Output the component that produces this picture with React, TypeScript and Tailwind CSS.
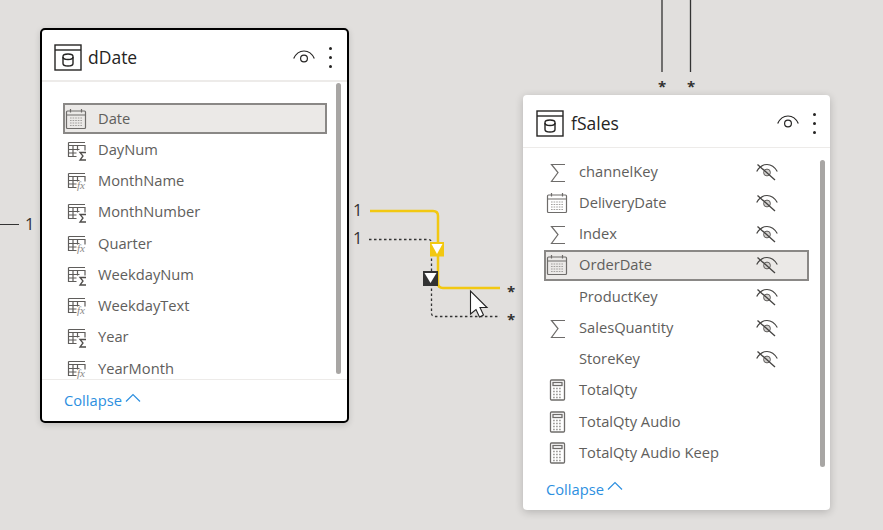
type FieldKind = 'date' | 'sum' | 'fx' | 'sigma' | 'calc' | 'none';

interface Field {
  name: string;
  kind: FieldKind;
  selected?: boolean;
  hidden?: boolean;
}

const dateFields: Field[] = [
  { name: 'Date', kind: 'date', selected: true },
  { name: 'DayNum', kind: 'sum' },
  { name: 'MonthName', kind: 'fx' },
  { name: 'MonthNumber', kind: 'sum' },
  { name: 'Quarter', kind: 'fx' },
  { name: 'WeekdayNum', kind: 'sum' },
  { name: 'WeekdayText', kind: 'fx' },
  { name: 'Year', kind: 'sum' },
  { name: 'YearMonth', kind: 'fx' },
];

const salesFields: Field[] = [
  { name: 'channelKey', kind: 'sigma', hidden: true },
  { name: 'DeliveryDate', kind: 'date', hidden: true },
  { name: 'Index', kind: 'sigma', hidden: true },
  { name: 'OrderDate', kind: 'date', selected: true, hidden: true },
  { name: 'ProductKey', kind: 'none', hidden: true },
  { name: 'SalesQuantity', kind: 'sigma', hidden: true },
  { name: 'StoreKey', kind: 'none', hidden: true },
  { name: 'TotalQty', kind: 'calc' },
  { name: 'TotalQty Audio', kind: 'calc' },
  { name: 'TotalQty Audio Keep', kind: 'calc' },
];

function TableIcon() {
  return (
    <svg width="28" height="27" viewBox="0 0 28 27" fill="none" stroke="#252423" strokeWidth="1.4">
      <rect x="1" y="1" width="26" height="25" />
      <path d="M1 6h26" />
      <path d="M9 12.500c0-1.600 2.200-2.500 5-2.500s5 .9 5 2.500v7c0 1.600-2.200 2.500-5 2.500s-5-.9-5-2.500z" />
      <path d="M9 13c0 1.600 2.200 2.500 5 2.500s5-.9 5-2.500" />
    </svg>
  );
}

function FieldIcon({ kind }: { kind: FieldKind }) {
  if (kind === 'none') return <span className="w-[22px] h-[22px]" />;
  if (kind === 'date') {
    return (
      <svg width="22" height="22" viewBox="0 0 22 22" fill="none" stroke="#6e6c6a" strokeWidth="1.200">
        <rect x="1.500" y="3" width="19" height="17.500" rx="1" />
        <path d="M1.500 7h19M5.500 1v3.500M16.500 1v3.500" />
        <path d="M5 10h12M5 12.500h12M5 15h12M5 17.500h12" stroke="#a19f9d" strokeWidth="1.200" strokeDasharray="1.600 1" />
      </svg>
    );
  }
  if (kind === 'sigma') {
    return (
      <svg width="22" height="22" viewBox="0 0 22 22" fill="none" stroke="#6e6c6a" strokeWidth="1.200">
        <path d="M19 3.500H5.500l6.500 8-6.500 9H19" />
      </svg>
    );
  }
  if (kind === 'calc') {
    return (
      <svg width="22" height="22" viewBox="0 0 22 22" fill="none" stroke="#6e6c6a" strokeWidth="1.300">
        <rect x="4.500" y="1" width="14" height="20" rx="1" />
        <rect x="7" y="3.500" width="9" height="3" />
        <path d="M7 9.500h9M7 12.500h9M7 15.500h9M7 18.500h9" stroke="#a19f9d" strokeWidth="1.400" strokeDasharray="1.800 1.200" />
      </svg>
    );
  }
  return (
    <svg width="22" height="22" viewBox="0 0 22 22" fill="none" stroke="#5f5d5b" strokeWidth="1.200">
      <path d="M3.500 3.500h16.500M3.500 3.500v14h8M3.500 6.500h16.500v5" />
      <path d="M8 6.500v11M3.500 10.500h11M3.500 14h8M12.500 6.500v5" />
      {kind === 'sum' ? (
        <path d="M21 13.500h-6l3 3.500-3 4h6" strokeWidth="1.300" stroke="#4f4d4b" />
      ) : (
        <text x="12" y="18.500" fontSize="11" fontStyle="italic" fontFamily="'Liberation Serif', serif" fill="#8a8886" stroke="none">
          fx
        </text>
      )}
    </svg>
  );
}

function EyeIcon() {
  return (
    <svg width="22" height="16" viewBox="0 0 22 16" fill="none" stroke="#252423" strokeWidth="1.200">
      <path d="M.7 8.500C3 3.500 7 1 11 1s8 2.500 10.300 7.500" />
      <circle cx="11" cy="8.500" r="3.400" />
    </svg>
  );
}

function EyeOffIcon() {
  return (
    <svg width="22" height="18" viewBox="0 0 22 18" fill="none" stroke="#444341" strokeWidth="1.200">
      <path d="M.7 8.500C3 4.500 7 1.500 11 1.500s8 3 10.300 7" />
      <circle cx="11" cy="9.500" r="3.400" fill="#d2d0ce" stroke="#605e5c" strokeWidth="1" />
      <path d="M1.500 1.500l17.500 15.500" strokeWidth="1.300" />
    </svg>
  );
}

function MoreDots() {
  return (
    <div className="flex flex-col gap-[6px]">
      <span className="w-[3px] h-[3px] rounded-full bg-[#252423]" />
      <span className="w-[3px] h-[3px] rounded-full bg-[#252423]" />
      <span className="w-[3px] h-[3px] rounded-full bg-[#252423]" />
    </div>
  );
}

function FieldRow({ field }: { field: Field }) {
  return (
    <div
      className={`h-[31.25px] shrink-0 flex items-center pl-[2px] pr-[31px] text-[#605e5c] text-[14.7px] ${
        field.selected ? 'bg-[#ebe9e7] outline-2 -outline-offset-2 outline-[#8a8886]' : ''
      }`}
    >
      <span className="w-[33px] shrink-0 flex items-center">
        <FieldIcon kind={field.kind} />
      </span>
      <span className="flex-1 whitespace-nowrap pb-[2px]">{field.name}</span>
      {field.hidden && <EyeOffIcon />}
    </div>
  );
}

function Collapse() {
  return (
    <div className="flex items-center gap-[3px] text-[14.7px] text-[#2d8fdf]">
      <span>Collapse</span>
      <svg width="16" height="10" viewBox="0 0 16 10" fill="none" stroke="#2d8fdf" strokeWidth="1.200" className="-mt-[5px]">
        <path d="M1 8.500L8 1.500l7 7" />
      </svg>
    </div>
  );
}

function Connectors() {
  return (
    <svg width="883" height="530" viewBox="0 0 883 530" fill="none" className="absolute left-0 top-0">
      <path d="M662 0v72M690.500 0v72" stroke="#333" strokeWidth="1.300" />
      <path d="M0 224.500h19" stroke="#333" strokeWidth="1" />
      <path d="M369 239.500h59q3.500 0 3.500 3.500v70q0 3.500 3.500 3.500h65" stroke="#333" strokeWidth="1.300" strokeDasharray="2.500 2.500" />
      <path d="M370 211h63q5 0 5 5v67q0 5 5 5h57" stroke="#f2c811" strokeWidth="2.500" />
      <rect x="430" y="242" width="14" height="14.500" fill="#f2c811" />
      <path d="M431.500 244h11l-5.500 10z" fill="#fff" />
      <rect x="423" y="271" width="15" height="15" fill="#333" />
      <path d="M424.500 273h12l-6 10z" fill="#fff" />
      <path
        d="M470.500 291v23l5.500-4.500 3.500 7.500 4-2-3.500-7.500h7z"
        fill="#fff"
        stroke="#222"
        strokeWidth="1.100"
      />
    </svg>
  );
}

export default function App() {
  return (
    <div className="relative w-[883px] h-[530px] overflow-hidden bg-[#e1dfdd] font-['Open_Sans','Liberation_Sans',sans-serif]">
      <Connectors />

      {/* relationship labels */}
      <span className="absolute left-[25px] top-[212px] text-[16.5px] text-[#323130]">1</span>
      <span className="absolute left-[353px] top-[198px] text-[16.5px] text-[#323130]">1</span>
      <span className="absolute left-[353px] top-[226px] text-[16.5px] text-[#323130]">1</span>
      <span className="absolute left-[507px] top-[280px] text-[15px] font-bold text-[#323130]">*</span>
      <span className="absolute left-[507px] top-[308px] text-[15px] font-bold text-[#323130]">*</span>
      <span className="absolute left-[658px] top-[75px] text-[15px] font-bold text-[#323130]">*</span>
      <span className="absolute left-[687px] top-[75px] text-[15px] font-bold text-[#323130]">*</span>

      {/* dDate */}
      <div className="absolute left-[40px] top-[28px] w-[309px] h-[395px] flex flex-col bg-white border-2 border-black rounded-[5px] shadow-[0_2px_6px_rgba(0,0,0,0.15)]">
        <div className="h-[52px] shrink-0 flex items-center pt-[5px] pl-[12px] pr-[15px] border-b-2 border-[#edebe9]">
          <TableIcon />
          <span className="ml-[6px] flex-1 text-[17.5px] text-[#252423]">dDate</span>
          <EyeIcon />
          <span className="ml-[14px]">
            <MoreDots />
          </span>
        </div>
        <div className="flex-1 min-h-0 flex border-b border-[#edebe9]">
          <div className="w-[285px] shrink-0 pl-[21px] pt-[21px] flex flex-col overflow-hidden">
            {dateFields.map((f) => (
              <FieldRow key={f.name} field={f} />
            ))}
          </div>
          <div className="ml-[9px] mt-[1px] mb-[5px] w-[5px] rounded-full bg-[#a8a6a4]" />
        </div>
        <div className="h-[41px] shrink-0 flex items-center pl-[22px]">
          <Collapse />
        </div>
      </div>

      {/* fSales */}
      <div className="absolute left-[523px] top-[95px] w-[307px] h-[415px] flex flex-col bg-white rounded-[4px] shadow-[0_2px_8px_rgba(0,0,0,0.2)]">
        <div className="h-[53px] shrink-0 flex items-center pt-[4px] pl-[13px] pr-[14px] border-b border-[#edebe9]">
          <TableIcon />
          <span className="ml-[7px] flex-1 text-[17.5px] text-[#252423]">fSales</span>
          <EyeIcon />
          <span className="ml-[14px]">
            <MoreDots />
          </span>
        </div>
        <div className="flex-1 min-h-0 flex">
          <div className="w-[286px] shrink-0 pl-[21px] pt-[8px] flex flex-col overflow-hidden">
            {salesFields.map((f) => (
              <FieldRow key={f.name} field={f} />
            ))}
          </div>
          <div className="ml-[11px] mt-[12px] mb-[0px] w-[5px] rounded-full bg-[#a8a6a4]" />
        </div>
        <div className="h-[43px] shrink-0 flex items-center pt-[1px] pl-[23px]">
          <Collapse />
        </div>
      </div>
    </div>
  );
}
